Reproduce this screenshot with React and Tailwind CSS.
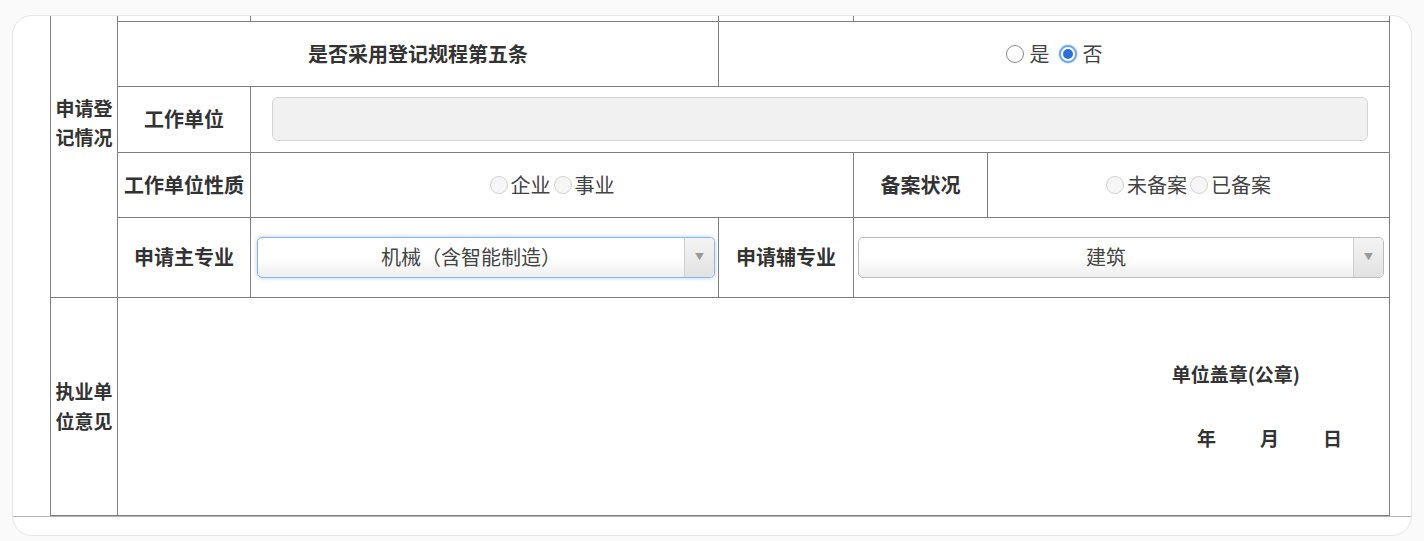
import React from 'react';

const Radio = ({ checked = false, disabled = false }) => {
  if (checked) {
    return (
      <span className="inline-flex w-[18px] h-[18px] rounded-full border-2 border-[#6ea6ec] bg-white items-center justify-center shadow-[0_0_2px_#7fb2f0]">
        <span className="w-[10px] h-[10px] rounded-full bg-[#2c6fd8]" />
      </span>
    );
  }
  return (
    <span
      className={`inline-block w-[18px] h-[18px] rounded-full border ${
        disabled ? 'border-[#d2d2d2] bg-[#f6f6f6]' : 'border-[#8a8a8a] bg-white'
      }`}
    />
  );
};

const RadioGroup = ({ options, value, disabled }) => (
  <div
    className={`flex items-center justify-center text-[20px] text-[#444] ${
      disabled ? 'gap-[3px]' : 'gap-[9px]'
    }`}
  >
    {options.map((opt) => (
      <label key={opt} className={`inline-flex items-center ${disabled ? 'gap-[3px]' : 'gap-[6px]'}`}>
        <Radio checked={opt === value} disabled={disabled} />
        <span>{opt}</span>
      </label>
    ))}
  </div>
);

const Select = ({ value, focused = false }) => (
  <div
    className={`flex h-[41px] rounded-[5px] border bg-gradient-to-b from-white from-50% to-[#efefef] ${
      focused ? 'border-[#8fb4ec] shadow-[0_0_4px_rgba(90,140,230,0.45)]' : 'border-[#bdbdbd]'
    }`}
  >
    <div className="flex-1 flex items-center justify-center text-[20px] text-[#444]">{value}</div>
    <div className="w-[30px] flex items-center justify-center border-l border-[#cfcfcf] bg-gradient-to-b from-[#f4f4f4] to-[#e2e2e2] rounded-r-[5px]">
      <span className="text-[9px] text-[#999]">▼</span>
    </div>
  </div>
);

const cell = 'border border-[#7f7f7f] p-0 text-center align-middle';
const label = `${cell} font-bold text-[#333] text-[20px]`;

export default function App() {
  return (
    <div
      className="w-[1424px] h-[541px] bg-[#fafafa] pt-[15px] px-[12px]"
      style={{ fontFamily: '"Noto Sans CJK SC", "Noto Sans", sans-serif' }}
    >
      <div className="h-[521px] rounded-[20px] border border-[#e6e6e6] bg-white overflow-hidden flex flex-col">
        <div className="pl-[37px] pr-[23px] border-b border-[#b5b5b5]">
          <table className="table-fixed border-collapse w-[1339px] border-t-0">
            <colgroup>
              <col className="w-[67px]" />
              <col className="w-[133px]" />
              <col className="w-[468px]" />
              <col className="w-[135px]" />
              <col className="w-[134px]" />
              <col className="w-[402px]" />
            </colgroup>
            <tbody>
              <tr className="h-[5px]">
                <td
                  rowSpan={5}
                  className={`${cell} border-t-0 font-bold text-[#333] text-[19px] leading-[29px] pb-[68px] px-[2px]`}
                >
                  申请登记情况
                </td>
                <td className={`${cell} border-t-0`} />
                <td className={`${cell} border-t-0`} />
                <td className={`${cell} border-t-0`} />
                <td colSpan={2} className={`${cell} border-t-0`} />
              </tr>
              <tr className="h-[65px]">
                <td colSpan={2} className={label}>是否采用登记规程第五条</td>
                <td colSpan={3} className={cell}>
                  <RadioGroup options={['是', '否']} value="否" />
                </td>
              </tr>
              <tr className="h-[66px]">
                <td className={label}>工作单位</td>
                <td colSpan={4} className={`${cell} px-[21px]`}>
                  <div className="h-[44px] rounded-[6px] border border-[#d4d4d4] bg-[#f1f1f1]" />
                </td>
              </tr>
              <tr className="h-[65px]">
                <td className={label}>工作单位性质</td>
                <td colSpan={2} className={cell}>
                  <RadioGroup options={['企业', '事业']} disabled />
                </td>
                <td className={label}>备案状况</td>
                <td className={cell}>
                  <RadioGroup options={['未备案', '已备案']} disabled />
                </td>
              </tr>
              <tr className="h-[80px]">
                <td className={label}>申请主专业</td>
                <td className={`${cell} pl-[6px] pr-[3px]`}>
                  <Select value="机械（含智能制造）" focused />
                </td>
                <td className={label}>申请辅专业</td>
                <td colSpan={2} className={`${cell} pl-[4px] pr-[5px]`}>
                  <Select value="建筑" />
                </td>
              </tr>
              <tr className="h-[218px]">
                <td className={`${cell} font-bold text-[#333] text-[19px] leading-[30px] px-[2px]`}>
                  执业单位意见
                </td>
                <td colSpan={5} className={cell}>
                  <div className="flex flex-col items-end gap-[36px] font-bold text-[#333] text-[19px]">
                    <div className="mr-[89px]">单位盖章(公章)</div>
                    <div className="mr-[47px] flex gap-[44px]">
                      <span>年</span>
                      <span>月</span>
                      <span>日</span>
                    </div>
                  </div>
                </td>
              </tr>
            </tbody>
          </table>
        </div>
        <div className="flex-1" />
      </div>
    </div>
  );
}
